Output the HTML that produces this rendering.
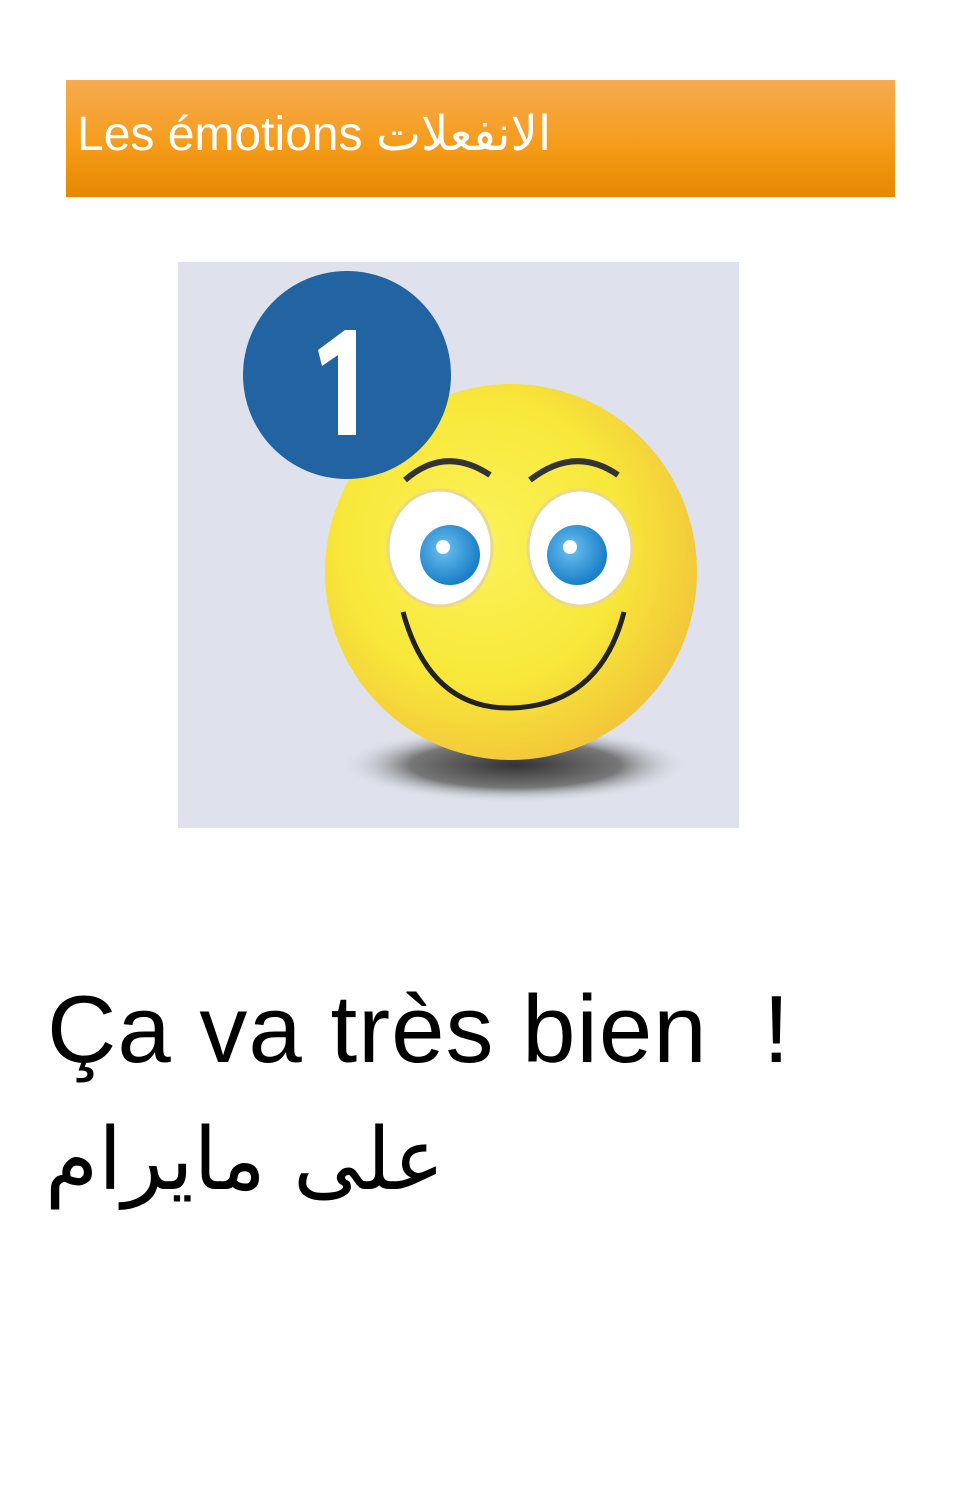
<!DOCTYPE html>
<html><head><meta charset="utf-8"><style>
body{margin:0;width:960px;height:1512px;background:#fff;position:relative;overflow:hidden;font-family:"Liberation Sans","DejaVu Sans",sans-serif}
.hdr{position:absolute;left:66px;top:80px;width:829px;height:117px;background:linear-gradient(#f6ab52,#f59c1a 55%,#e68800);}
.hdr span{position:absolute;left:11px;top:26px;color:#fff;font-size:48px;white-space:nowrap}
.t1{position:absolute;left:47px;top:975px;font-size:96px;color:#000;white-space:nowrap;letter-spacing:1px}
.t2{position:absolute;left:45px;top:1110px;font-size:86px;color:#000;white-space:nowrap;font-family:"DejaVu Sans",sans-serif}
</style></head><body>
<div class="hdr"><span>Les émotions الانفعلات</span></div>
<svg style="position:absolute;left:178px;top:262px" width="561" height="566" viewBox="178 262 561 566">
<defs>
<radialGradient id="f" cx="0.42" cy="0.42" r="0.62"><stop offset="0" stop-color="#fbf25a"/><stop offset="0.6" stop-color="#f8e83a"/><stop offset="1" stop-color="#f2c53a"/></radialGradient>
<radialGradient id="s" cx="0.5" cy="0.5" r="0.5"><stop offset="0" stop-color="#333"/><stop offset="0.6" stop-color="#777"/><stop offset="1" stop-color="#dfe2ec" stop-opacity="0"/></radialGradient>
<radialGradient id="e" cx="0.4" cy="0.4" r="0.6"><stop offset="0" stop-color="#6cc0f0"/><stop offset="1" stop-color="#1a7fc8"/></radialGradient>
</defs>
<rect x="178" y="262" width="561" height="566" fill="#dfe2ec"/>
<ellipse cx="515" cy="765" rx="175" ry="38" fill="url(#s)"/>
<ellipse cx="511" cy="572" rx="186" ry="188" fill="url(#f)"/>
<ellipse cx="440" cy="548" rx="52" ry="58" fill="#fff" stroke="#e8d890" stroke-width="3"/>
<ellipse cx="580" cy="548" rx="52" ry="58" fill="#fff" stroke="#e8d890" stroke-width="3"/>
<circle cx="450" cy="555" r="30" fill="url(#e)"/>
<circle cx="577" cy="555" r="30" fill="url(#e)"/>
<circle cx="443" cy="547" r="7" fill="#fff"/><circle cx="570" cy="547" r="7" fill="#fff"/>
<path d="M405 480 Q445 445 490 475" stroke="#333" stroke-width="6" fill="none"/>
<path d="M530 480 Q575 445 618 475" stroke="#333" stroke-width="6" fill="none"/>
<path d="M403 612 Q430 710 512 708 Q600 705 624 612" stroke="#222" stroke-width="5" fill="none"/>
<circle cx="347" cy="375" r="104" fill="#2264a1"/>
<path d="M318 350 L345 330 L356 330 L356 435 L338 435 L338 355 L322 366 Z" fill="#fff"/>
</svg>
<div class="t1">Ça va très bien&nbsp; !</div>
<div class="t2">على مايرام</div>
</body></html>
